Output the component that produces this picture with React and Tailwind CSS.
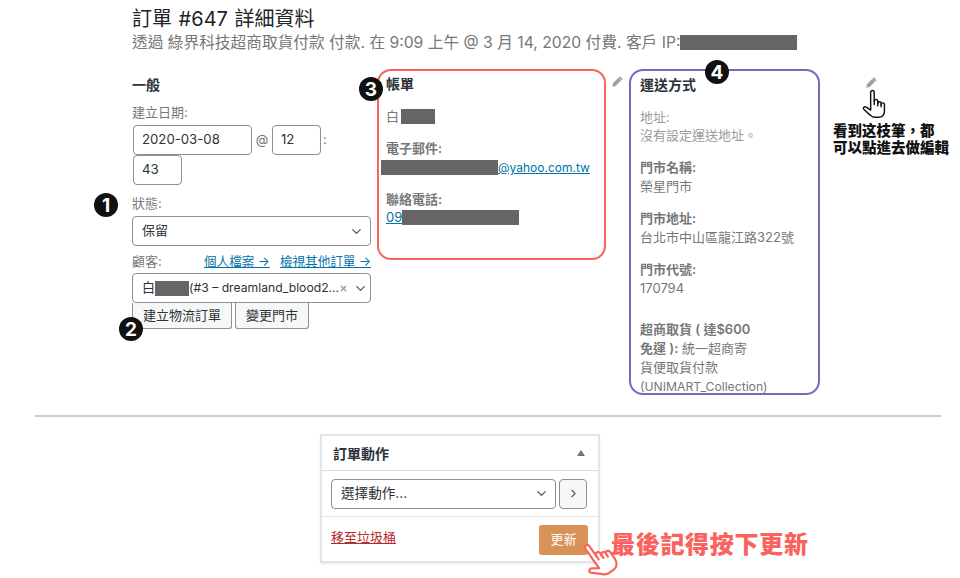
import React from "react";
import { ChevronDown, ChevronRight, X } from "lucide-react";

const font = "font-['Inter','Noto_Sans_CJK_TC',sans-serif]";

function Badge({ n, className }) {
  return (
    <div className={`absolute w-6 h-6 rounded-full bg-[#111] text-white flex items-center justify-center text-[19px] font-bold leading-none ${className}`}>
      {n}
    </div>
  );
}
function Pencil({ className }) {
  return (
    <svg viewBox="0 0 12 12" className={`w-[11px] h-[11px] ${className}`}>
      <path d="M8.6 0.4 L11.6 3.4 L4 11 L0.4 11.6 L1 8 Z" fill="#a0a0a0" />
      <path d="M7.2 2.2 L9.8 4.8" stroke="#fff" strokeWidth="0.6" />
    </svg>
  );
}
function Hand({ className, strokeWidth = 1.5 }) {
  return (
    <svg viewBox="0 0 24 27" fill="white" stroke="currentColor" strokeWidth={strokeWidth} strokeLinejoin="round" strokeLinecap="round" className={className}>
      <path d="M9 19 V3 a1.6 1.6 0 0 1 3.2 0 V11 a1.6 1.6 0 0 1 3.2 0 V13 a1.5 1.5 0 0 1 3 0 V14 a1.5 1.5 0 0 1 3 0 V20 c0 3 -2 5.5 -5 5.5 H12.5 c-2 0 -3 -1 -4 -2 L2.8 18.3 c-1.2 -1.3 .8 -3.2 2.2 -2 L9 19 Z" />
      <path d="M12.2 11 V14 M15.4 13 V15 M18.4 14 V16" fill="none" />
    </svg>
  );
}
const Red = ({ className }) => <span className={`inline-block shrink-0 bg-[#666] h-[15px] ${className}`} />;
const inputCls = "h-[30px] border border-[#8c8f94] rounded-[4px] text-[13.2px] text-[#2c3338] flex items-center px-[8px] bg-white";

function Field({ label, children, className = "" }) {
  return (
    <div className={`text-[13px] leading-[19px] ${className}`}>
      <div className="font-semibold text-[#777]">{label}</div>
      <div className="text-[#777]">{children}</div>
    </div>
  );
}

export default function App() {
  return (
    <div className={`relative w-[960px] h-[578px] overflow-hidden bg-white ${font}`}>
      <div className="pl-[132px] pt-[6px]">
        <h1 className="text-[20px] leading-[26px] text-[#1d2327] [word-spacing:1px]">訂單 #647 詳細資料</h1>
        <p className="text-[15.7px] leading-[19px] text-[#777] mt-[1px] flex items-center whitespace-nowrap">
          透過 綠界科技超商取貨付款 付款. 在 9:09 上午 @ 3 月 14, 2020 付費. 客戶 IP:
          <Red className="w-[117px]" />
        </p>
      </div>

      <div className="flex pl-[132px] mt-[17px] items-start">
        <div className="w-[239px] pt-[7px]">
          <div className="text-[14px] leading-[18px] font-semibold text-[#2c3338]">一般</div>
          <div className="text-[13px] leading-[17px] text-[#777] mt-[10px]">建立日期:</div>
          <div className="flex flex-wrap items-center mt-[4px] pl-[1px]">
            <div className={`${inputCls} w-[119px]`}>2020-03-08</div>
            <span className="text-[13px] text-[#777] mx-[1px] w-[18px] text-center">@</span>
            <div className={`${inputCls} w-[49px]`}>12</div>
            <span className="text-[13px] text-[#777] ml-[2px]">:</span>
            <div className="basis-full h-0" />
            <div className={`${inputCls} w-[49px]`}>43</div>
          </div>
          <div className="text-[13px] leading-[17px] text-[#777] mt-[10px]">狀態:</div>
          <div className={`${inputCls} mt-[4px] justify-between pl-[9px] pr-[6px]`}>
            <span className="text-[13px]">保留</span>
            <ChevronDown size={15} strokeWidth={2} className="text-[#50575e]" />
          </div>
          <div className="flex justify-between text-[12.6px] leading-[17px] mt-[7px]">
            <span className="text-[13px] text-[#777]">顧客:</span>
            <span className="text-[#0073aa] flex gap-[10px]">
              <span className="underline">個人檔案 →</span>
              <span className="underline">檢視其他訂單 →</span>
            </span>
          </div>
          <div className={`${inputCls} mt-[3px] pl-[9px] pr-[6px] whitespace-nowrap`}>
            <span className="text-[13px] flex items-center">
              白<Red className="w-[34px] h-[14px]" />
              <span className="text-[12.2px]">(#3 – dreamland_blood2...</span>
            </span>
            <X size={9} strokeWidth={3.5} className="text-[#999] ml-auto shrink-0" />
            <ChevronDown size={15} strokeWidth={2} className="text-[#50575e] ml-[5px] shrink-0" />
          </div>
          <div className="flex gap-[3px]">
            <div className="h-[26px] w-[100px] border border-[#8c8f94] border-t-0 rounded-b-[3px] bg-[#f6f7f7] text-[13px] text-[#2c3338] flex items-center justify-center">建立物流訂單</div>
            <div className="h-[26px] w-[74px] border border-[#8c8f94] border-t-0 rounded-b-[3px] bg-[#f6f7f7] text-[13px] text-[#2c3338] flex items-center justify-center">變更門市</div>
          </div>
        </div>

        <div className="ml-[6px] w-[229px] h-[191px] border-2 border-[#f9625d] rounded-[14px] pl-[7px] pt-[4px] shrink-0">
          <div className="text-[14px] leading-[18px] font-semibold text-[#2c3338]">帳單</div>
          <div className="flex items-center text-[13px] leading-[17px] text-[#777] mt-[15px]">白<Red className="w-[34px] ml-[2px]" /></div>
          <div className="text-[13px] leading-[17px] font-semibold text-[#777] mt-[15px]">電子郵件:</div>
          <div className="flex items-center text-[12px] leading-[17px] text-[#0073aa] -ml-[5px] mt-[2px]">
            <Red className="w-[117px]" /><span className="underline">@yahoo.com.tw</span>
          </div>
          <div className="text-[13px] leading-[17px] font-semibold text-[#777] mt-[15px]">聯絡電話:</div>
          <div className="flex items-center text-[13px] leading-[17px] text-[#0073aa] mt-[1px]">
            <span className="underline">09</span><Red className="w-[117px]" />
          </div>
        </div>

        <Pencil className="ml-[6px] mt-[7px] shrink-0" />

        <div className="ml-[6px] w-[191px] h-[326px] border-2 border-[#7b68b8] rounded-[14px] pl-[9px] pt-[5px] overflow-hidden shrink-0">
          <div className="text-[14px] leading-[18px] font-semibold text-[#2c3338]">運送方式</div>
          <div className="text-[13px] leading-[18px] text-[#999] mt-[14px]">地址:</div>
          <div className="text-[13px] leading-[18px] text-[#999]">沒有設定運送地址。</div>
          <Field label="門市名稱:" className="mt-[14px]">榮星門市</Field>
          <Field label="門市地址:" className="mt-[13px]">台北市中山區龍江路322號</Field>
          <Field label="門市代號:" className="mt-[13px]">170794</Field>
          <div className="text-[13px] text-[#777] mt-[22px] whitespace-nowrap">
            <div className="h-[19px] leading-[19px] font-semibold">超商取貨 ( 達$600</div>
            <div className="h-[19px] leading-[19px]"><span className="font-semibold">免運 ):</span> 統一超商寄</div>
            <div className="h-[19px] leading-[19px]">貨便取貨付款</div>
            <div className="h-[19px] leading-[19px] text-[12.2px]">(UNIMART_Collection)</div>
          </div>
        </div>
      </div>

      <div className="absolute left-[35px] top-[415px] w-[906px] h-[2px] bg-[#ccc]" />

      <div className="absolute left-[320px] top-[434px] w-[280px] h-[129px] border-2 border-[#e2e4e7] bg-white shadow-[0_1px_2px_rgba(0,0,0,0.08)]">
        <div className="h-[35px] flex items-center justify-between pl-[11px] pr-[13px] border-b border-[#dcdcde]">
          <span className="text-[14px] font-semibold text-[#2c3338]">訂單動作</span>
          <span className="w-0 h-0 border-x-[4px] border-x-transparent border-b-[6px] border-b-[#6b7280]" />
        </div>
        <div className="h-[46px] flex items-center gap-[3px] pl-[9px] border-b border-[#e5e5e5]">
          <div className={`${inputCls} w-[225px] justify-between pl-[9px] pr-[6px]`}>
            <span className="text-[13.6px]">選擇動作...</span>
            <ChevronDown size={15} strokeWidth={2} className="text-[#50575e]" />
          </div>
          <div className="w-[28px] h-[30px] border border-[#8c8f94] rounded-[4px] bg-[#f6f7f7] flex items-center justify-center">
            <ChevronRight size={13} strokeWidth={2} className="text-[#50575e]" />
          </div>
        </div>
        <div className="flex justify-between pl-[9px] pr-[10px] pt-[8px]">
          <span className="text-[13px] leading-[18px] text-[#b32d2e] underline mt-[3px]">移至垃圾桶</span>
          <div className="w-[49px] h-[30px] rounded-[3px] bg-[#d89156] text-white text-[13px] flex items-center justify-center">更新</div>
        </div>
      </div>

      {/* annotations */}
      <Badge n="1" className="left-[94px] top-[193px]" />
      <Badge n="2" className="left-[119px] top-[317px]" />
      <Badge n="3" className="left-[359px] top-[77px]" />
      <Badge n="4" className="left-[705px] top-[60px]" />
      <Pencil className="absolute left-[866px] top-[77px]" />
      <Hand strokeWidth={1.3} className="absolute left-[860px] top-[89px] w-[28px] h-[30px] text-[#111]" />
      <div className="absolute left-[833px] top-[122px] text-[14.5px] leading-[17px] font-black text-[#111] whitespace-nowrap">
        看到这枝筆，都<br />可以點進去做編輯
      </div>
      <Hand strokeWidth={1.5} className="absolute left-[580px] top-[539px] w-[36px] h-[40px] -rotate-[35deg] text-[#f9625d]" />
      <div className="absolute left-[611px] top-[530px] text-[24px] leading-[30px] font-black text-[#f9625d] whitespace-nowrap tracking-[0.7px]">
        最後記得按下更新
      </div>
    </div>
  );
}
